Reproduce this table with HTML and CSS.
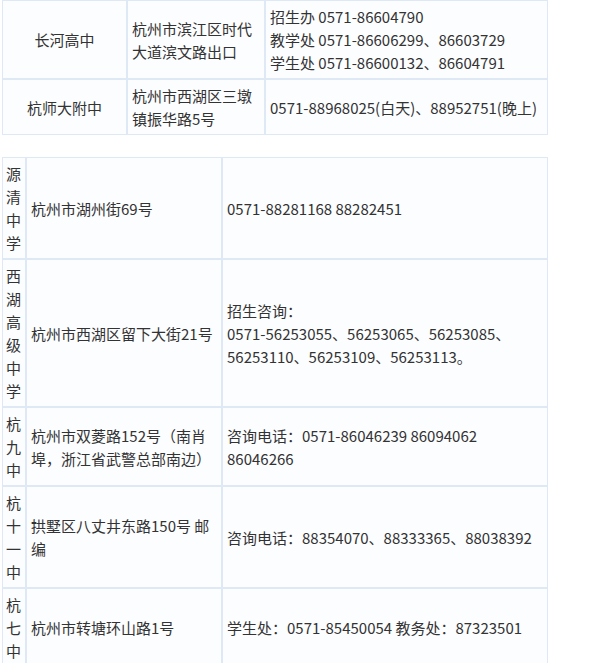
FILE: index.html
```html
<!DOCTYPE html>
<html lang="zh-CN">
<head>
<meta charset="utf-8">
<title>杭州高中联系方式</title>
<link rel="stylesheet" href="styles.css">
</head>
<body>
<div class="page">
  <table class="info info-a">
    <tr>
      <td class="name-a">长河高中</td>
      <td class="addr-a">杭州市滨江区时代大道滨文路出口</td>
      <td class="tel-a">招生办 0571-86604790<br>教学处 0571-86606299、86603729<br>学生处 0571-86600132、86604791</td>
    </tr>
    <tr>
      <td class="name-a">杭师大附中</td>
      <td>杭州市西湖区三墩镇振华路5号</td>
      <td>0571-88968025(白天)、88952751(晚上)</td>
    </tr>
  </table>

  <table class="info info-b">
    <tr>
      <td class="name-b">源清中学</td>
      <td class="addr-b">杭州市湖州街69号</td>
      <td class="tel-b">0571-88281168 88282451</td>
    </tr>
    <tr>
      <td class="name-b">西湖高级中学</td>
      <td>杭州市西湖区留下大街21号</td>
      <td>招生咨询：<br>0571-56253055、56253065、56253085、56253110、56253109、56253113。</td>
    </tr>
    <tr>
      <td class="name-b">杭九中</td>
      <td>杭州市双菱路152号（南肖埠，浙江省武警总部南边）</td>
      <td>咨询电话：0571-86046239 86094062 86046266</td>
    </tr>
    <tr>
      <td class="name-b">杭十一中</td>
      <td>拱墅区八丈井东路150号 邮编</td>
      <td>咨询电话：88354070、88333365、88038392</td>
    </tr>
    <tr>
      <td class="name-b">杭七中</td>
      <td>杭州市转塘环山路1号</td>
      <td>学生处：0571-85450054 教务处：87323501</td>
    </tr>
  </table>
</div>
</body>
</html>
```

FILE: styles.css
```css
html, body {
  margin: 0;
  padding: 0;
  background: #ffffff;
}

.page {
  padding: 0 2px;
  font-family: "Noto Sans CJK SC", "Noto Sans", sans-serif;
  font-size: 15px;
  line-height: 23px;
  color: #333333;
  text-spacing-trim: space-all;
}

.info {
  border-collapse: separate;
  border-spacing: 0;
  table-layout: fixed;
  width: 546px;
}

.info td {
  box-sizing: border-box;
  border: 1px solid #dfe9f5;
  background: #fcfdff;
  padding: 4px 4px;
  vertical-align: middle;
  text-align: left;
  word-break: normal;
  overflow-wrap: break-word;
}

.info-a {
  margin: 0;
}

.info-b {
  margin-top: 22px;
}

.info-a td.name-a {
  width: 125px;
  text-align: center;
}

.info-a td.addr-a {
  width: 138px;
}

.info-a td.tel-a {
  width: 283px;
}

.info-b td.name-b {
  width: 24px;
  padding: 4px 3px;
  word-break: break-all;
}

.info-b td.addr-b {
  width: 196px;
}

.info-b td.tel-b {
  width: 326px;
}
```
